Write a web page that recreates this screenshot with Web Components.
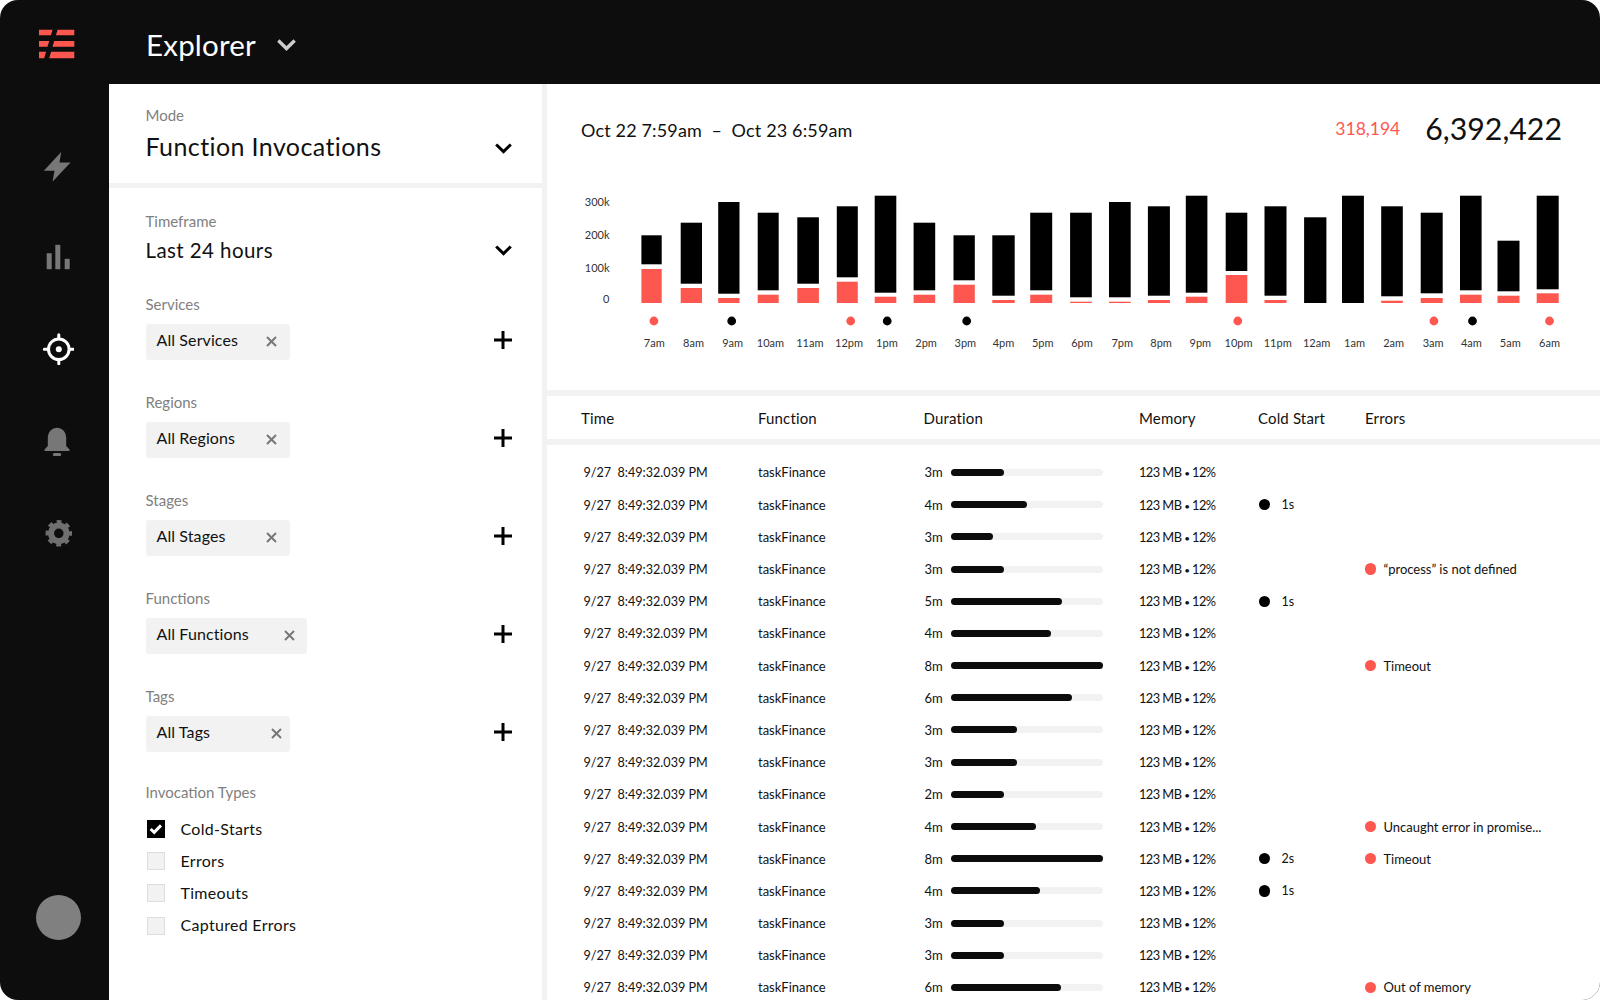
<!DOCTYPE html>
<html lang="en">
<head>
<meta charset="UTF-8">
<title>Explorer</title>
<style>
    html, body { margin: 0; height: 100%; background: #fff; overflow: hidden; }
    body { font-family: Lato, "Noto Sans", sans-serif; color: #111; }
</style>
</head>
<body>

<app-shell>
    <top-bar slot="top" title="Explorer"></top-bar>
    <side-nav slot="side">
        <nav-item>
            <svg viewBox="0 0 32 32" fill="#777"><path d="M19.2 2 17.5 12.5H28.5L10.5 31.7 12.5 20.7H1.8Z"/></svg>
        </nav-item>
        <nav-item>
            <svg viewBox="0 0 32 32" fill="#777"><g transform="translate(-.5 -.5)"><rect x="5.2" y="11.7" width="5" height="16"/><rect x="13.8" y="3.3" width="5" height="24.4"/><rect x="23.2" y="17.3" width="5" height="10.4"/></g></svg>
        </nav-item>
        <nav-item>
            <svg viewBox="0 0 32 32" fill="none" stroke="#fff" stroke-width="3" stroke-linecap="round"><circle cx="16.8" cy="16.3" r="10.3"/><path d="M16.8 1.8V5M16.8 27.6V30.8M2.3 16.3H5.5M28.1 16.3H31.3"/><circle cx="16.8" cy="16.3" r="3" fill="#fff" stroke="none"/></svg>
        </nav-item>
        <nav-item>
            <svg viewBox="0 0 32 32" fill="#777"><g transform="translate(-1 -1)"><path d="M6.8 22V13a9.2 9.2 0 0 1 18.4 0V22l3.3 3.6q.6 1.4-.8 1.4H4.3q-1.4 0-.8-1.4Z"/><rect x="11.8" y="29" width="8.4" height="3" rx="1.5"/></g></svg>
        </nav-item>
        <nav-item>
            <svg viewBox="0 0 32 32" fill="none" stroke="#6f6f6f"><circle cx="16.8" cy="16.3" r="7.8" stroke-width="6"/><circle cx="16.8" cy="16.3" r="11.5" stroke-width="3.5" stroke-dasharray="4.8 4.23" stroke-dashoffset="2.4"/></svg>
        </nav-item>
    </side-nav>
    <filter-panel slot="filters"></filter-panel>
    <chart-panel slot="chart"></chart-panel>
    <log-table slot="table"></log-table>
</app-shell>

<script>
    const RED = '#fd5750';

    const chevron = (color, w) => `<svg width="${w}" height="${Math.round(w * 0.62)}" viewBox="0 0 17 10.5" fill="none" stroke="${color}" stroke-width="3"><path d="M1.2 1.2 8.5 8.4 15.8 1.2"/></svg>`;

    class AppShell extends HTMLElement {
        constructor() {
            super();
            this.attachShadow({ mode: 'open' });
            this.shadowRoot.innerHTML = `
            <style>
                :host { display: block; width: 1600px; height: 1000px; overflow: hidden; border-radius: 18px; background: #0d0d0d; }
                .grid { display: grid; grid-template-columns: 108.5px 438px 1fr; grid-template-rows: 84px 312px 1fr; height: 1000px; }
                .top { grid-column: 1 / -1; }
                .side { grid-row: 2 / 4; }
                .filters { grid-row: 2 / 4; background: #fff; border-right: 5px solid #f2f2f2; box-sizing: border-box; }
                .chart, .table { background: #fff; min-width: 0; overflow: hidden; }
            </style>
            <div class="grid">
                <div class="top"><slot name="top"></slot></div>
                <div class="side"><slot name="side"></slot></div>
                <div class="filters"><slot name="filters"></slot></div>
                <div class="chart"><slot name="chart"></slot></div>
                <div class="table"><slot name="table"></slot></div>
            </div>`;
        }
    }
    customElements.define('app-shell', AppShell);

    class TopBar extends HTMLElement {
        constructor() {
            super();
            this.attachShadow({ mode: 'open' });
            this.shadowRoot.innerHTML = `
            <style>
                :host { display: flex; align-items: center; box-sizing: border-box; height: 84px; padding: 5px 0 0 39px; color: #fff; }
                .logo { width: 36px; height: 30px; margin-right: 71px; margin-top: -2px; }
                .title { font-size: 29.5px; line-height: 36px; letter-spacing: 0.2px; margin-right: 21px; }
                svg { display: block; }
            </style>
            <svg class="logo" viewBox="39 29 36 30" fill="${RED}">
                <path d="M39 29.7H52.6L50.9 35.3H39ZM57.6 29.7H74.3V35.3H55.9Z"/>
                <path d="M39 41H49.2L47.5 46.7H39ZM54.2 41H74.3V46.7H52.5Z"/>
                <path d="M39 51.7H46.1L44.2 58.3H39ZM51.1 51.7H74.3V58.3H49.2Z"/>
            </svg>
            <span class="title">${this.getAttribute('title')}</span>
            ${chevron('#ccc', 19)}`;
        }
    }
    customElements.define('top-bar', TopBar);

    class SideNav extends HTMLElement {
        constructor() {
            super();
            this.attachShadow({ mode: 'open' });
            this.shadowRoot.innerHTML = `
            <style>
                :host { display: flex; flex-direction: column; align-items: center; height: 916px; box-sizing: border-box; padding: 36px 0 60px 8px; }
                .avatar { width: 45px; height: 45px; border-radius: 50%; background: #808080; margin-top: auto; margin-left: 1px; }
            </style>
            <slot></slot>
            <div class="avatar"></div>`;
        }
    }
    customElements.define('side-nav', SideNav);

    class NavItem extends HTMLElement {
        constructor() {
            super();
            this.attachShadow({ mode: 'open' });
            this.shadowRoot.innerHTML = `
            <style>
                :host { display: flex; align-items: center; justify-content: center; width: 32px; height: 91.7px; }
                ::slotted(svg) { display: block; width: 32px; height: 32px; }
            </style>
            <slot></slot>`;
        }
    }
    customElements.define('nav-item', NavItem);

    class FilterChip extends HTMLElement {
        constructor() {
            super();
            const w = this.getAttribute('width') || 144;
            const pad = this.getAttribute('pad') || 13;
            this.attachShadow({ mode: 'open' });
            this.shadowRoot.innerHTML = `
            <style>
                :host { display: flex; align-items: center; justify-content: space-between; box-sizing: border-box; width: ${w}px; height: 36px; padding: 0 ${pad}px 0 11px; background: #f2f2f2; border-radius: 3px; font-size: 16px; }
                span { margin-bottom: 5px; letter-spacing: 0.1px; }
                svg { display: block; margin-top: -1px; }
            </style>
            <span><slot></slot></span>
            <svg width="11" height="11" viewBox="0 0 11 11" stroke="#777" stroke-width="2"><path d="M1 1 10 10M10 1 1 10"/></svg>`;
        }
    }
    customElements.define('filter-chip', FilterChip);

    class FilterGroup extends HTMLElement {
        constructor() {
            super();
            this.attachShadow({ mode: 'open' });
            this.shadowRoot.innerHTML = `
            <style>
                :host { display: block; height: 98px; }
                .label { font-size: 15px; line-height: 19px; color: #808080; margin-bottom: 10px; }
                .row { display: flex; align-items: center; justify-content: space-between; }
                svg { display: block; margin-top: -5px; }
            </style>
            <div class="label">${this.getAttribute('label')}</div>
            <div class="row">
                <slot></slot>
                <svg width="18" height="18" viewBox="0 0 18 18" stroke="#000" stroke-width="3"><path d="M9 0V18M0 9H18"/></svg>
            </div>`;
        }
    }
    customElements.define('filter-group', FilterGroup);

    class CheckRow extends HTMLElement {
        constructor() {
            super();
            const on = this.hasAttribute('checked');
            this.attachShadow({ mode: 'open' });
            this.shadowRoot.innerHTML = `
            <style>
                :host { display: flex; align-items: center; height: 32.2px; font-size: 16px; }
                .box { box-sizing: border-box; width: 18px; height: 18px; margin: 0 16px 0 1px; background: #f2f2f2; border: 1px solid #ddd; }
                .box.on { background: #000; border-color: #000; }
                span { margin-bottom: 2px; letter-spacing: 0.3px; }
                svg { display: block; }
            </style>
            <div class="box ${on ? 'on' : ''}">${on ? '<svg width="16" height="16" viewBox="0 0 16 16" fill="none" stroke="#fff" stroke-width="3"><path d="M2.6 8 6.2 11.4 13 4.4"/></svg>' : ''}</div>
            <span><slot></slot></span>`;
        }
    }
    customElements.define('check-row', CheckRow);

    class FilterPanel extends HTMLElement {
        constructor() {
            super();
            this.attachShadow({ mode: 'open' });
            this.shadowRoot.innerHTML = `
            <style>
                :host { display: block; height: 916px; overflow: hidden; }
                .label { font-size: 15px; line-height: 20px; color: #808080; }
                .mode { box-sizing: border-box; padding: 20.5px 30px 0 37px; border-bottom: 5px solid #f2f2f2; height: 104px; }
                .value { display: flex; align-items: center; justify-content: space-between; }
                .big { font-size: 25px; line-height: 30px; margin-top: 6.5px; letter-spacing: 0.4px; }
                .big svg { margin-top: 4px; }
                .mid { font-size: 20.5px; line-height: 26px; margin-top: 6.5px; letter-spacing: 0.42px; }
                .mid svg { margin-top: 1px; }
                .rest { padding: 22.5px 30px 0 37px; }
                .groups { margin-top: 32px; }
                .types { margin-top: -3.5px; }
                .types .label { margin-bottom: 11.5px; }
            </style>
            <div class="mode">
                <div class="label">Mode</div>
                <div class="value big"><span>Function Invocations</span>${chevron('#000', 17)}</div>
            </div>
            <div class="rest">
                <div class="label">Timeframe</div>
                <div class="value mid"><span>Last 24 hours</span>${chevron('#000', 17)}</div>
                <div class="groups">
                    <filter-group label="Services"><filter-chip>All Services</filter-chip></filter-group>
                    <filter-group label="Regions"><filter-chip>All Regions</filter-chip></filter-group>
                    <filter-group label="Stages"><filter-chip>All Stages</filter-chip></filter-group>
                    <filter-group label="Functions"><filter-chip width="161" pad="12">All Functions</filter-chip></filter-group>
                    <filter-group label="Tags"><filter-chip pad="8">All Tags</filter-chip></filter-group>
                </div>
                <div class="types">
                    <div class="label">Invocation Types</div>
                    <check-row checked>Cold-Starts</check-row>
                    <check-row>Errors</check-row>
                    <check-row>Timeouts</check-row>
                    <check-row>Captured Errors</check-row>
                </div>
            </div>`;
        }
    }
    customElements.define('filter-panel', FilterPanel);

    // x, width, top, black bottom, red top (0 = no red part), label, label centre, dot colour, dot x
    const HOURS = [
        [640.9, 20.3, 235.3, 264.3, 269, '7am', 653.8, RED, 653.4],
        [680.2, 21.3, 222.7, 283.7, 288, '8am', 693],
        [717.7, 21.3, 202, 293.7, 298, '9am', 732.2, '#000', 731.2],
        [757.2, 21, 212.7, 290.3, 294.7, '10am', 770],
        [796.8, 21.6, 217.3, 283.7, 288, '11am', 809.3],
        [836.3, 21, 206.3, 277.3, 281.7, '12pm', 848.5, RED, 850.2],
        [874.2, 21.6, 195.7, 292.7, 296.7, '1pm', 886.4, '#000', 886.7],
        [913.1, 21.6, 222.7, 290.3, 294.7, '2pm', 925.6],
        [953, 21.3, 235.3, 280.3, 284.7, '3pm', 964.8, '#000', 966.2],
        [991.8, 22.4, 235.3, 295.7, 300, '4pm', 1003],
        [1029.7, 22, 212.7, 290.3, 294.7, '5pm', 1042.2],
        [1069.6, 21.7, 212.7, 297.3, 301.7, '6pm', 1081.5],
        [1108.5, 21.7, 202, 297.3, 301.7, '7pm', 1121.7],
        [1147.4, 22, 206.3, 295.7, 300, '8pm', 1160.6],
        [1185.3, 21.6, 195.7, 292.7, 296.7, '9pm', 1199.8],
        [1225.2, 21.6, 212.7, 271, 275, '10pm', 1238, RED, 1237.3],
        [1264, 22, 206.3, 295.7, 300, '11pm', 1277.2],
        [1303.6, 22.3, 217.3, 303, 0, '12am', 1316.1],
        [1341.5, 21.9, 195.7, 303, 0, '1am', 1354],
        [1380.7, 21.6, 206.3, 296.3, 300.7, '2am', 1393.2],
        [1420.2, 22, 212.7, 293.3, 298, '3am', 1432.7, RED, 1433.4],
        [1459.5, 21.6, 195.7, 290.3, 294.7, '4am', 1470.9, '#000', 1472],
        [1497, 22, 240.7, 291.3, 295.7, '5am', 1509.8],
        [1536.2, 22, 195.7, 289.3, 293.3, '6am', 1549, RED, 1549]
    ];

    class ChartPanel extends HTMLElement {
        constructor() {
            super();
            this.attachShadow({ mode: 'open' });
            let marks = '';
            for (const [x, w, top, bottom, red, label, lx, dot, dx] of HOURS) {
                marks += `<rect x="${x}" y="${top}" width="${w}" height="${(bottom - top).toFixed(1)}" fill="#000"/>`;
                if (red) marks += `<rect x="${x}" y="${red}" width="${w}" height="${(303 - red).toFixed(1)}" fill="${RED}"/>`;
                if (dot) marks += `<circle cx="${dx}" cy="321" r="4.4" fill="${dot}"/>`;
                marks += `<text x="${lx}" y="347" text-anchor="middle">${label}</text>`;
            }
            const axis = [['300k', 206], ['200k', 238.5], ['100k', 272], ['0', 303]]
                .map(([t, y]) => `<text x="609" y="${y}" text-anchor="end">${t}</text>`).join('');
            this.shadowRoot.innerHTML = `
            <style>
                :host { display: block; height: 312px; box-sizing: border-box; border-bottom: 6px solid #f2f2f2; }
                .head { display: flex; align-items: center; height: 66px; box-sizing: border-box; padding: 24px 38px 0 34.5px; }
                .range { font-size: 18px; margin: 2px auto 0 0; white-space: pre; letter-spacing: 0.15px; }
                .errors { font-size: 17.5px; color: ${RED}; margin: 0 25px 2px 0; }
                .total { font-size: 30.3px; margin-bottom: 2px; }
                svg { display: block; }
                text { font-size: 11px; fill: #333; }
            </style>
            <div class="head">
                <span class="range">Oct 22 7:59am  –  Oct 23 6:59am</span>
                <span class="errors">318,194</span>
                <span class="total">6,392,422</span>
            </div>
            <svg width="1053" height="240" viewBox="546.5 150 1053 240">${axis}${marks}</svg>`;
        }
    }
    customElements.define('chart-panel', ChartPanel);

    const COLS = '177px 165.5px 215.5px 119px 107px 1fr';

    class LogRow extends HTMLElement {
        constructor() {
            super();
            const cold = this.getAttribute('cold');
            const err = this.getAttribute('err');
            this.attachShadow({ mode: 'open' });
            this.shadowRoot.innerHTML = `
            <style>
                :host { display: grid; grid-template-columns: ${COLS}; align-items: center; height: 32.2px; font-size: 13px; padding-left: 34.5px; white-space: nowrap; }
                .time { padding: 1px 0 0 2.5px; font-size: 12.6px; }
                .mem { font-size: 12.8px; letter-spacing: -0.55px; }
                .mem small { font-size: 10px; }
                .dur { display: flex; align-items: center; padding-left: 1px; }
                .dur b { font-weight: 400; width: 26.5px; }
                .track { width: 152px; height: 7px; border-radius: 4px; background: #f2f2f2; }
                .fill { height: 7px; border-radius: 4px; background: #0c0c0c; }
                .cold, .err { display: flex; align-items: center; }
                i { width: 11.4px; height: 11.4px; border-radius: 50%; }
                .cold i { background: #000; margin: 0 11px 0 1px; }
                .cold span { font-size: 12.5px; }
                .err i { background: ${RED}; margin-right: 7px; }
            </style>
            <span class="time">9/27&nbsp; 8:49:32.039 PM</span>
            <span>taskFinance</span>
            <div class="dur"><b>${this.getAttribute('dur')}m</b><div class="track"><div class="fill" style="width:${this.getAttribute('fill')}px"></div></div></div>
            <span class="mem">123 MB <small>•</small> 12%</span>
            <div class="cold">${cold ? `<i></i><span>${cold}</span>` : ''}</div>
            <div class="err">${err ? `<i></i><span>${err}</span>` : ''}</div>`;
        }
    }
    customElements.define('log-row', LogRow);

    const ROWS = [
        [3, 53], [4, 75.5, '1s'], [3, 42], [3, 53, '', '“process” is not defined'], [5, 111, '1s'], [4, 100],
        [8, 152, '', 'Timeout'], [6, 121], [3, 66.3], [3, 66.3], [2, 53],
        [4, 84.7, '', 'Uncaught error in promise...'], [8, 152, '2s', 'Timeout'], [4, 89, '1s'],
        [3, 53], [3, 53], [6, 110, '', 'Out of memory']
    ];

    class LogTable extends HTMLElement {
        constructor() {
            super();
            this.attachShadow({ mode: 'open' });
            const heads = ['Time', 'Function', 'Duration', 'Memory', 'Cold Start', 'Errors'].map(h => `<span>${h}</span>`).join('');
            const rows = ROWS.map(([dur, fill, cold, err]) =>
                `<log-row dur="${dur}" fill="${fill}" cold="${cold || ''}" err="${err || ''}"></log-row>`).join('');
            this.shadowRoot.innerHTML = `
            <style>
                :host { display: block; }
                .head { display: grid; grid-template-columns: ${COLS}; align-items: center; height: 43px; padding-left: 34.5px; font-size: 15px; letter-spacing: 0.15px; border-bottom: 6px solid #f2f2f2; }
                .rows { padding-top: 11.4px; }
            </style>
            <div class="head">${heads}</div>
            <div class="rows">${rows}</div>`;
        }
    }
    customElements.define('log-table', LogTable);
</script>

</body>
</html>
